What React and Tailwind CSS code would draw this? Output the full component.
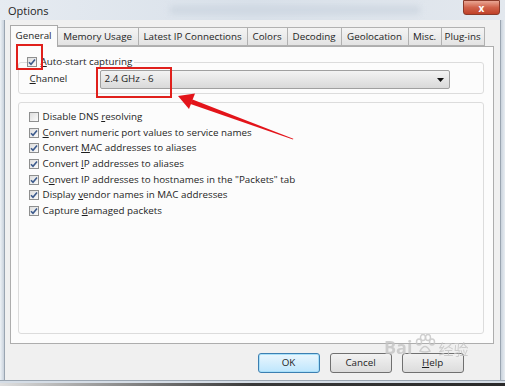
import React from "react";

const font = { fontFamily: '"Open Sans", "Noto Sans", "Noto Sans CJK SC", sans-serif' };

function Check({ checked }) {
  return (
    <span className="inline-flex w-[10px] h-[10px] shrink-0 border border-[#8e8f8f] bg-gradient-to-br from-[#dedede] to-[#fbfbfb] items-center justify-center">
      {checked && (
        <svg width="8" height="8" viewBox="0 0 8 8">
          <path d="M1 4.2 L3 6.3 L7 1.4" fill="none" stroke="#3c5a8c" strokeWidth="1.6" />
        </svg>
      )}
    </span>
  );
}

function U({ children }) {
  return <span className="underline underline-offset-1">{children}</span>;
}

const rows = [
  [false, <>Disable DNS <U>r</U>esolving</>],
  [true, <><U>C</U>onvert numeric port values to service names</>],
  [true, <>Convert <U>M</U>AC addresses to aliases</>],
  [true, <>Convert <U>I</U>P addresses to aliases</>],
  [true, <>C<U>o</U>nvert IP addresses to hostnames in the "Packets" tab</>],
  [true, <>Display <U>v</U>endor names in MAC addresses</>],
  [true, <>Capture <U>d</U>amaged packets</>],
];

const tabs = [
  ["Memory Usage", "w-[81px]"],
  ["Latest IP Connections", "w-[109px]"],
  ["Colors", "w-[40px]"],
  ["Decoding", "w-[54px]"],
  ["Geolocation", "w-[67px]"],
  ["Misc.", "w-[33px]"],
  ["Plug-ins", "w-[43px]"],
];

export default function App() {
  return (
    <div className="relative w-[507px] h-[386px] overflow-hidden bg-white text-[#1e1e1e]" style={font}>
      <div className="flex flex-col w-[505px] h-[386px]">
        {/* title bar */}
        <div className="relative h-[20px] shrink-0 bg-gradient-to-r from-[#e6ebf1] via-[#d9e1ea] to-[#e3e8ee] flex items-center pl-[8px]">
          <span className="text-[11px] leading-none">Options</span>
          <div className="absolute left-[170px] top-[6px] w-[250px] h-[8px] bg-[#c8d2dd] blur-[3px] opacity-70" />
          <div className="absolute right-[5px] top-0 w-[37px] h-[15px] rounded-b-[3px] border border-[#8a3a2a] bg-gradient-to-b from-[#e9a593] via-[#d0624a] to-[#c04028] flex items-center justify-center">
            <span className="text-white text-[10px] font-bold leading-none">x</span>
          </div>
        </div>
        <div className="flex flex-1 min-h-0">
          <div className="w-[5px] bg-gradient-to-r from-[#eef2f6] to-[#c9d2dc] border-r border-[#9aa5b1]" />
          {/* client */}
          <div className="flex-1 bg-[#f0f0f0] flex flex-col pl-[5px] pr-[6px] pt-[5px] text-[9.8px]">
            {/* tabs */}
            <div className="flex items-end h-[21px] relative z-10">
              <div className="w-[48px] shrink-0 h-[22px] flex items-center justify-center bg-[#fbfbfb] border border-b-0 border-[#a9a9a9] whitespace-nowrap -mb-px">General</div>
              {tabs.map(([t, w]) => (
                <div key={t} className={`${w} shrink-0 h-[19px] flex items-center justify-center bg-gradient-to-b from-[#f4f4f4] to-[#e3e3e3] border border-l-0 border-[#b1b1b1] whitespace-nowrap leading-none`}>
                  {t}
                </div>
              ))}
            </div>
            {/* panel */}
            <div className="w-[484px] h-[298px] bg-[#fcfcfc] border border-[#adadad] pt-[15px] pl-[7px] pr-[9px] flex flex-col">
              {/* group 1 */}
              <div className="relative h-[32px] border border-[#dcdcdc] rounded-[3px] shrink-0">
                <div className="absolute left-[8px] -top-[6px] flex items-center gap-[4px] bg-[#fcfcfc] pr-[2px] leading-none">
                  <Check checked />
                  <span><U>A</U>uto-start capturing</span>
                </div>
                <div className="flex items-center pt-[7px] pl-[11px]">
                  <span className="w-[70px]"><U>C</U>hannel</span>
                  <div className="w-[350px] h-[19px] border border-[#a0a0a0] rounded-[2px] bg-gradient-to-b from-[#f3f3f3] to-[#d9d9d9] flex items-center justify-between pl-[4px] pr-[5px]">
                    <span>2.4 GHz - 6</span>
                    <svg width="7" height="4" viewBox="0 0 7 4"><path d="M0 0 H7 L3.5 4 Z" fill="#111" /></svg>
                  </div>
                </div>
              </div>
              {/* group 2 */}
              <div className="mt-[8px] h-[232px] border border-[#dcdcdc] rounded-[3px] pt-[6px] pl-[10px] flex flex-col">
                {rows.map(([c, label], i) => (
                  <div key={i} className="h-[15.7px] flex items-center gap-[4px] leading-none whitespace-nowrap">
                    <Check checked={c} />
                    <span>{label}</span>
                  </div>
                ))}
              </div>
            </div>
            {/* buttons */}
            <div className="flex justify-end gap-[10px] pr-[30px] mt-[9px]">
              <div className="w-[62px] h-[20px] rounded-[3px] border border-[#3c7fb1] bg-gradient-to-b from-[#eaf6fd] to-[#bee6fd] shadow-[inset_0_0_0_1px_#a8e0fa] flex items-center justify-center">OK</div>
              <div className="w-[62px] h-[20px] rounded-[3px] border border-[#707070] bg-gradient-to-b from-[#f2f2f2] to-[#dcdcdc] flex items-center justify-center">Cancel</div>
              <div className="w-[62px] h-[20px] rounded-[3px] border border-[#707070] bg-gradient-to-b from-[#f2f2f2] to-[#dcdcdc] flex items-center justify-center"><U>H</U>elp</div>
            </div>
          </div>
          <div className="w-[6px] bg-gradient-to-r from-[#c9d2dc] to-[#e8edf2] border-l border-[#9aa5b1]" />
        </div>
        <div className="h-[3px] shrink-0 bg-[#d5dde6] border-t border-[#9aa5b1]" />
        <div className="h-[3px] shrink-0 bg-gradient-to-r from-[#e0e0e0] via-[#3a3a3a] to-[#2a2a2a]" />
      </div>

      {/* watermark */}
      <div className="absolute left-[384px] top-[334px] z-20 flex items-end gap-[2px] text-[#c4c4c4] opacity-80 pointer-events-none">
        <span className="text-[18px] font-bold leading-none">Bai</span>
        <svg width="22" height="20" viewBox="0 0 22 20" className="mb-[2px]">
          <g fill="none" stroke="#c4c4c4" strokeWidth="1.5">
            <ellipse cx="5" cy="8" rx="2.5" ry="3" />
            <ellipse cx="9" cy="3.5" rx="2.5" ry="3" />
            <ellipse cx="14" cy="3.5" rx="2.5" ry="3" />
            <ellipse cx="18" cy="8" rx="2.5" ry="3" />
            <path d="M6 17 Q11 8 16 17 Q11 19 6 17 Z" />
          </g>
        </svg>
        <span className="text-[15px] leading-none" style={{ fontFamily: '"Noto Sans CJK SC", sans-serif' }}>经验</span>
      </div>

      {/* annotations */}
      <div className="absolute z-20 left-[16px] top-[44px] w-[27px] h-[26px] border-2 border-[#e0201c]" />
      <div className="absolute z-20 left-[96px] top-[67px] w-[76px] h-[31px] border-2 border-[#e0201c]" />
      <svg className="absolute z-20 left-0 top-0 pointer-events-none" width="507" height="386" viewBox="0 0 507 386">
        <polygon points="178,96 195,93.5 189,109" fill="#e3141a" />
        <polygon points="192.5,99.5 190.5,104 293,139.6 293.3,138.8" fill="#e3141a" />
      </svg>
    </div>
  );
}
